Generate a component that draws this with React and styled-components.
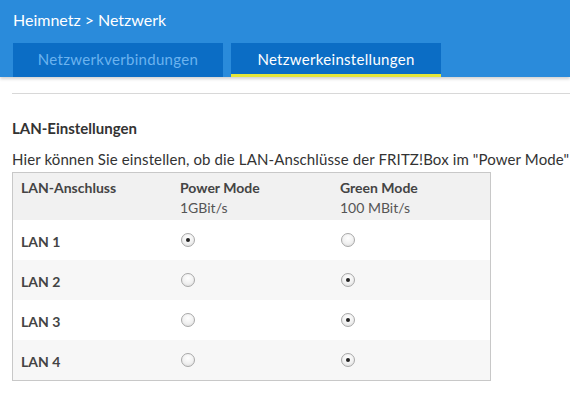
import React, { useState } from 'react'
import styled, { createGlobalStyle } from 'styled-components'

const Global = createGlobalStyle`
  html, body {
    margin: 0;
    padding: 0;
    background: #fff;
    font-family: Lato, "Open Sans", sans-serif;
    color: #333;
  }
`

const Header = styled.header`
  background: #2a8bdb;
  box-shadow: 0 2px 3px rgba(0,0,0,0.18);
  padding: 0 0 0 13px;
  height: 77px;
  box-sizing: border-box;
  display: flex;
  flex-direction: column;
`

const Crumbs = styled.div`
  color: #fff;
  font-size: 16px;
  height: 43px;
  line-height: 40px;
  box-sizing: border-box;
  span {
    margin: 0 4px;
  }
`

const Tabs = styled.nav`
  display: flex;
  gap: 8px;
  height: 34px;
`

const Tab = styled.div`
  width: 210px;
  background: #0b6dc5;
  color: ${p => (p.active ? '#fff' : '#6cb3ef')};
  font-size: 15px;
  letter-spacing: 0.3px;
  display: flex;
  justify-content: center;
  align-items: center;
  box-sizing: border-box;
  padding-bottom: ${p => (p.active ? '0' : '3px')};
  border-bottom: ${p => (p.active ? '3px solid #e5e63a' : 'none')};
`

const Main = styled.main`
  padding: 16px 0 0 12px;
`

const Rule = styled.hr`
  border: none;
  border-top: 1px solid #d8d8d8;
  margin: 0;
`

const Title = styled.h2`
  font-size: 15px;
  font-weight: 700;
  margin: 24px 0 0;
  color: #333;
  line-height: 20px;
`

const Text = styled.p`
  font-size: 15px;
  letter-spacing: 0.12px;
  margin: 10px 0 0;
  line-height: 22px;
  white-space: nowrap;
  color: #333;
`

const Table = styled.div`
  width: 479px;
  border: 1px solid #c8c8c8;
  box-sizing: border-box;
  margin-top: 2px;
`

const Row = styled.div`
  display: grid;
  grid-template-columns: 159px 160px 1fr;
  height: ${p => (p.head ? '47px' : '40px')};
  background: ${p => (p.head ? '#f1f1f1' : p.alt ? '#f7f7f7' : '#fff')};
  align-items: ${p => (p.head ? 'start' : 'center')};
  padding-left: 8px;
  font-size: 14px;
`

const HeadCell = styled.div`
  padding-top: 5px;
  line-height: 20px;
  font-weight: 700;
  color: #444;
  small {
    display: block;
    font-weight: 400;
    font-size: 14px;
    color: #555;
  }
`

const Label = styled.div`
  font-weight: 700;
  color: #444;
  padding-top: 2px;
`

const Radio = styled.button`
  width: 14px;
  height: 14px;
  border-radius: 50%;
  border: 1px solid #a8a8a8;
  background: radial-gradient(circle at 50% 35%, #fff 0%, #f0f0f0 55%, #d6d6d6 100%);
  margin-left: 1px;
  padding: 0;
  display: flex;
  align-items: center;
  justify-content: center;
  cursor: pointer;
  &::after {
    content: '';
    width: 4px;
    height: 4px;
    border-radius: 50%;
    background: ${p => (p.checked ? '#222' : 'transparent')};
  }
`

const ports = ['LAN 1', 'LAN 2', 'LAN 3', 'LAN 4']

export default function App() {
  const [modes, setModes] = useState(['power', 'green', 'green', 'green'])

  const pick = (i, m) => {
    const next = [...modes]
    next[i] = m
    setModes(next)
  }

  return (
    <>
      <Global />
      <Header>
        <Crumbs>Heimnetz<span>&gt;</span>Netzwerk</Crumbs>
        <Tabs>
          <Tab>Netzwerkverbindungen</Tab>
          <Tab active>Netzwerkeinstellungen</Tab>
        </Tabs>
      </Header>
      <Main>
        <Rule />
        <Title>LAN-Einstellungen</Title>
        <Text>Hier können Sie einstellen, ob die LAN-Anschlüsse der FRITZ!Box im "Power Mode"</Text>
        <Table>
          <Row head>
            <HeadCell>LAN-Anschluss</HeadCell>
            <HeadCell>Power Mode<small>1GBit/s</small></HeadCell>
            <HeadCell>Green Mode<small>100 MBit/s</small></HeadCell>
          </Row>
          {ports.map((p, i) => (
            <Row key={p} alt={i % 2 === 1}>
              <Label>{p}</Label>
              <div><Radio checked={modes[i] === 'power'} onClick={() => pick(i, 'power')} /></div>
              <div><Radio checked={modes[i] === 'green'} onClick={() => pick(i, 'green')} /></div>
            </Row>
          ))}
        </Table>
      </Main>
    </>
  )
}
